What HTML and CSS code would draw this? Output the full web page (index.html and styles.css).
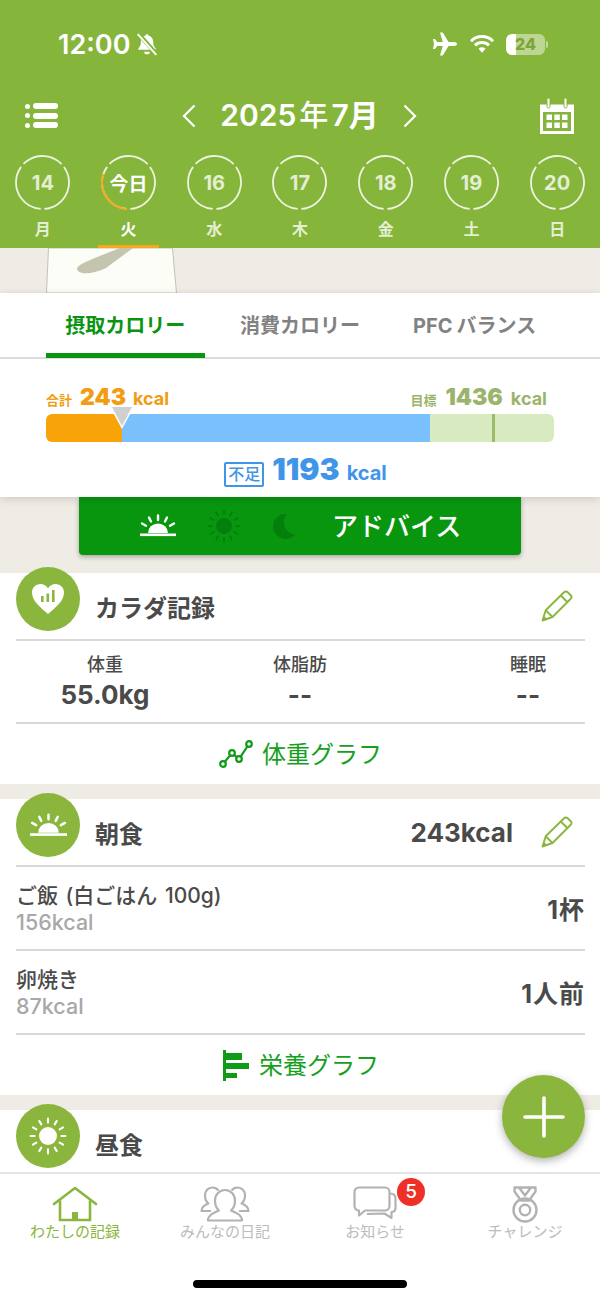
FILE: index.html
```html
<!DOCTYPE html>
<html lang="ja">
<head>
    <meta charset="UTF-8">
    <meta name="viewport" content="width=device-width, initial-scale=1.0">
    <title>わたしの記録</title>
    <link rel="stylesheet" href="styles.css">
</head>
<body>

<svg class="defs" width="0" height="0" aria-hidden="true">
    <symbol id="ring" viewBox="0 0 55 55">
        <circle cx="27.5" cy="27.5" r="26.5" pathLength="360" stroke-dasharray="122 8 122 8 92 8" transform="rotate(-36 27.5 27.5)"/>
    </symbol>
    <symbol id="sunrise" viewBox="0 0 36 24">
        <path d="M8 19a10 9.5 0 0 1 20 0z" fill="currentColor"/>
        <rect x="0" y="19.5" width="36" height="2.6" fill="currentColor"/>
        <g stroke="currentColor" stroke-width="2.4" stroke-linecap="round">
            <path d="M18 1.500v4.500M9 3.500l2 4M27 3.500l-2 4M2 9.500l4 2.200M34 9.500l-4 2.200"/>
        </g>
    </symbol>
    <symbol id="sun" viewBox="0 0 36 36">
        <circle cx="18" cy="18" r="8.500" fill="currentColor"/>
        <g stroke="currentColor" stroke-width="2" stroke-linecap="round">
            <path d="M18 1.500v3.800M18 30.700v3.800M1.500 18h3.800M30.700 18h3.800M9.750 3.700l1.900 3.300M24.350 29l1.900 3.300M26.250 3.700l-1.900 3.300M11.650 29l-1.900 3.300M3.700 9.750l3.300 1.900M29 24.350l3.300 1.900M32.300 9.750l-3.300 1.900M7 24.350l-3.300 1.900"/>
        </g>
    </symbol>
    <symbol id="pencil" viewBox="0 0 32 32">
        <g fill="none" stroke="#8ab63e" stroke-width="1.9" stroke-linejoin="round">
            <path d="M1.500 30.500l3.200-10.200L22.800 2.500q2-2 4-.2l2.700 2.700q2 2 0 4L11.500 27z"/>
            <path d="M4.700 20.300l6.800 6.700M19.800 5.500l6.800 6.700"/>
        </g>
        <path d="M1.500 30.500l1.400-4.700 3.300 3.300z" fill="#8ab63e"/>
    </symbol>
</svg>

<div class="app">
    <header class="top">
        <div class="status">
            <div class="status-left">
                <span class="clock">12:00</span>
                <svg class="bell" width="24" height="24" viewBox="0 0 22 22">
                    <path d="M11 2a1.300 1.300 0 0 1 1.300 1.300c3 .7 4.400 3.200 4.400 6.200 0 3 1 4.300 2.300 5.700v1H3v-1c1.300-1.400 2.300-2.700 2.300-5.700 0-3 1.400-5.500 4.400-6.200A1.300 1.300 0 0 1 11 2zM8.500 18h5a2.500 2.500 0 0 1-5 0z" fill="#fff"/>
                    <path d="M3 1.500l17 19" stroke="#86b53c" stroke-width="4"/>
                    <path d="M2.500 2l17 19" stroke="#fff" stroke-width="1.800"/>
                </svg>
            </div>
            <div class="status-right">
                <svg width="26" height="26" viewBox="0 0 26 26">
                    <path d="M25 13c0-1.200-1.300-2-3-2h-5.500L10.800 1.500H8l2.800 9.500H5.200L3 8H1l1 5-1 5h2l2.200-3h5.600L8 24.500h2.800L16.500 15H22c1.700 0 3-.8 3-2z" fill="#fff"/>
                </svg>
                <svg width="26" height="20" viewBox="0 0 26 20">
                    <g fill="none" stroke="#fff" stroke-width="3">
                        <path d="M2 7.200a15.500 15.500 0 0 1 22 0"/>
                        <path d="M6 11.400a10 10 0 0 1 14 0"/>
                    </g>
                    <path d="M9.500 14.800a5 5 0 0 1 7 0L13 18.800z" fill="#fff"/>
                </svg>
                <div class="battery"><span>24</span></div>
                <i class="battery-tip"></i>
            </div>
        </div>

        <div class="month-bar">
            <div class="menu-icon">
                <i class="menu-line"></i>
                <i class="menu-line"></i>
                <i class="menu-line"></i>
            </div>
            <div class="month">
                <svg width="14" height="24" viewBox="0 0 14 24"><path d="M12.500 1.500L2 12l10.500 10.500" fill="none" stroke="#fff" stroke-width="2.200"/></svg>
                <span class="month-text">2025<small>年</small>7月</span>
                <svg width="14" height="24" viewBox="0 0 14 24"><path d="M1.500 1.500L12 12 1.500 22.500" fill="none" stroke="#fff" stroke-width="2.200"/></svg>
            </div>
            <svg class="calendar" width="36" height="36" viewBox="0 0 36 36">
                <path d="M1 6.500h34V36H1z" fill="#fff"/>
                <rect x="4" y="14" width="28" height="19" fill="#86b53c"/>
                <rect x="8" y="0" width="3" height="10" rx="1.500" fill="#fff" stroke="#86b53c" stroke-width="1"/>
                <rect x="25" y="0" width="3" height="10" rx="1.500" fill="#fff" stroke="#86b53c" stroke-width="1"/>
                <g fill="#fff">
                    <rect x="7.500" y="16.500" width="5.500" height="5.500"/><rect x="15.300" y="16.500" width="5.500" height="5.500"/><rect x="23" y="16.500" width="5.500" height="5.500"/>
                    <rect x="7.500" y="24.500" width="5.500" height="5.500"/><rect x="15.300" y="24.500" width="5.500" height="5.500"/><rect x="23" y="24.500" width="5.500" height="5.500"/>
                </g>
            </svg>
        </div>

        <div class="week">
            <div class="day">
                <div class="ring"><svg width="55" height="55"><use href="#ring"/></svg><span>14</span></div>
                <div class="day-name">月</div>
            </div>
            <div class="day today">
                <div class="ring">
                    <svg width="55" height="55" viewBox="0 0 55 55">
                        <use href="#ring"/>
                        <circle class="ring-progress" cx="27.500" cy="27.500" r="26.500" pathLength="360" stroke-dasharray="106 254" transform="rotate(94 27.500 27.500)"/>
                    </svg>
                    <span>今日</span>
                </div>
                <div class="day-name">火</div>
            </div>
            <div class="day">
                <div class="ring"><svg width="55" height="55"><use href="#ring"/></svg><span>16</span></div>
                <div class="day-name">水</div>
            </div>
            <div class="day">
                <div class="ring"><svg width="55" height="55"><use href="#ring"/></svg><span>17</span></div>
                <div class="day-name">木</div>
            </div>
            <div class="day">
                <div class="ring"><svg width="55" height="55"><use href="#ring"/></svg><span>18</span></div>
                <div class="day-name">金</div>
            </div>
            <div class="day">
                <div class="ring"><svg width="55" height="55"><use href="#ring"/></svg><span>19</span></div>
                <div class="day-name">土</div>
            </div>
            <div class="day">
                <div class="ring"><svg width="55" height="55"><use href="#ring"/></svg><span>20</span></div>
                <div class="day-name">日</div>
            </div>
        </div>
    </header>

    <main class="content">
        <svg class="scene" width="600" height="45" viewBox="0 0 600 45">
            <path d="M48.500 0L46.500 45H176.500L172.500 0z" fill="#fdfdf7" stroke="#c4c2b8" stroke-width="1"/>
            <path d="M133 0L106 20C94 26 77 28 77 20 80 15 95 10 120 0z" fill="#c5c4ae"/>
        </svg>

        <section class="summary">
            <div class="tabs">
                <div class="tab tab-active">摂取カロリー</div>
                <div class="tab">消費カロリー</div>
                <div class="tab">PFC<small>バランス</small></div>
            </div>
            <div class="kcal">
                <div class="kcal-labels">
                    <div class="kcal-total"><small>合計</small><b>243</b><em>kcal</em></div>
                    <div class="kcal-goal"><small>目標</small><b>1436</b><em>kcal</em></div>
                </div>
                <div class="bar">
                    <div class="bar-eaten"></div>
                    <div class="bar-short"></div>
                    <div class="bar-rest"><i class="bar-mark"></i></div>
                    <i class="bar-pointer"></i>
                </div>
                <div class="shortage"><span class="shortage-tag">不足</span><b>1193</b><em>kcal</em></div>
            </div>
        </section>

        <div class="advice">
            <svg class="advice-icon" width="36" height="24"><use href="#sunrise"/></svg>
            <svg class="advice-icon off" width="34" height="34"><use href="#sun"/></svg>
            <svg class="advice-moon" width="26" height="26" viewBox="0 0 26 26"><path d="M17 1A12.500 12.500 0 1 0 25 21.500 12.500 12.500 0 0 1 17 1z" fill="#057f0b"/></svg>
            <span class="advice-text">アドバイス</span>
        </div>

        <section class="card">
            <div class="card-head">
                <div class="round-icon">
                    <svg width="34" height="32" viewBox="0 0 34 32">
                        <path d="M17 31C9 24 1 18 1 9.500 1 4.500 5 1 9.500 1 12.500 1 15.500 2.500 17 5.500 18.500 2.500 21.500 1 24.500 1 29 1 33 4.500 33 9.500 33 18 25 24 17 31z" fill="#fff"/>
                        <g fill="#8ab63e"><rect x="10" y="13" width="2.600" height="6"/><rect x="15.500" y="10.500" width="2.600" height="8.500"/><rect x="21" y="7" width="2.600" height="12"/></g>
                    </svg>
                </div>
                <h2 class="card-title">カラダ記録</h2>
                <svg class="pencil" width="32" height="32"><use href="#pencil"/></svg>
            </div>
            <div class="stats">
                <div class="stat"><span class="stat-label">体重</span><span class="stat-value">55.0kg</span></div>
                <div class="stat"><span class="stat-label">体脂肪</span><span class="stat-value">--</span></div>
                <div class="stat"><span class="stat-label">睡眠</span><span class="stat-value">--</span></div>
            </div>
            <div class="graph-link">
                <svg width="34" height="28" viewBox="0 0 34 28">
                    <path d="M4 24L13 13 20 19 30 4" fill="none" stroke="#0f9a17" stroke-width="2.200"/>
                    <g fill="#fff" stroke="#0f9a17" stroke-width="2.200"><circle cx="4" cy="24" r="2.800"/><circle cx="13" cy="13" r="2.800"/><circle cx="20" cy="19" r="2.800"/><circle cx="30" cy="4" r="2.800"/></g>
                </svg>
                <span>体重グラフ</span>
            </div>
        </section>

        <section class="card">
            <div class="card-head">
                <div class="round-icon"><svg width="37" height="25"><use href="#sunrise"/></svg></div>
                <h2 class="card-title">朝食</h2>
                <span class="card-kcal">243kcal</span>
                <svg class="pencil" width="32" height="32"><use href="#pencil"/></svg>
            </div>
            <div class="meal">
                <div class="meal-info"><div class="meal-name">ご飯 (白ごはん 100g)</div><div class="meal-kcal">156kcal</div></div>
                <div class="meal-amount">1杯</div>
            </div>
            <div class="meal">
                <div class="meal-info"><div class="meal-name">卵焼き</div><div class="meal-kcal">87kcal</div></div>
                <div class="meal-amount">1人前</div>
            </div>
            <div class="graph-link">
                <svg width="28" height="31" viewBox="0 0 28 31">
                    <g fill="#0f9a17"><rect x="1" y="0" width="3" height="31"/><rect x="1" y="3" width="19" height="7"/><rect x="1" y="13" width="26" height="6"/><rect x="1" y="23" width="14" height="5"/></g>
                </svg>
                <span>栄養グラフ</span>
            </div>
        </section>

        <section class="card">
            <div class="card-head">
                <div class="round-icon"><svg width="38" height="38"><use href="#sun"/></svg></div>
                <h2 class="card-title">昼食</h2>
            </div>
        </section>
    </main>

    <div class="fab">
        <svg width="42" height="42" viewBox="0 0 42 42"><path d="M21 2v38M2 21h38" stroke="#fff" stroke-width="3.600" stroke-linecap="round"/></svg>
    </div>

    <nav class="tabbar">
        <div class="tabbar-items">
            <div class="nav-item nav-active">
                <div class="nav-icon">
                    <svg width="46" height="36" viewBox="0 0 46 36">
                        <path d="M2 18L23 2l21 16" fill="none" stroke="#8ab63e" stroke-width="2.600" stroke-linejoin="round" stroke-linecap="round"/>
                        <path d="M8 14.500V34h30V14.500" fill="none" stroke="#8ab63e" stroke-width="2.600"/>
                        <rect x="20" y="26" width="6" height="8" fill="#8ab63e"/>
                    </svg>
                </div>
                <span>わたしの記録</span>
            </div>
            <div class="nav-item">
                <div class="nav-icon">
                    <svg width="50" height="36" viewBox="0 0 50 36">
                        <g fill="none" stroke="#b2b2b2" stroke-width="2.200" stroke-linejoin="round">
                            <path d="M11 25H1.500c0-4 3-6 7-7.500-2.500-2-3.500-5-3.500-8 0-4.500 3-8 7.500-8 2.500 0 4.500 1 6 3"/>
                            <path d="M39 25h9.500c0-4-3-6-7-7.500 2.500-2 3.500-5 3.500-8 0-4.500-3-8-7.500-8-2.500 0-4.500 1-6 3"/>
                            <path d="M8 34.500c0-5 4-7 11-10-3-2.500-4-6-4-10C15 8.500 19.500 4 25 4s10 4.500 10 10.500c0 4-1 7.500-4 10 7 3 11 5 11 10z" fill="#fff"/>
                        </g>
                    </svg>
                </div>
                <span>みんなの日記</span>
            </div>
            <div class="nav-item nav-notice">
                <div class="nav-icon">
                    <svg width="44" height="34" viewBox="0 0 44 34">
                        <g fill="none" stroke="#b2b2b2" stroke-width="2.200" stroke-linejoin="round">
                            <path d="M37 7.500c3 0 5.500 1.500 5.500 5V22c0 2.500-1.500 4-4 4v6l-7-4.500L14 28"/>
                            <path d="M6 1.500h26c2.500 0 4.500 2 4.500 4.500v14c0 2.500-2 4.500-4.500 4.500H12l-6 5v-5c-2.500 0-4.500-2-4.500-4.500V6C1.500 3.500 3.500 1.500 6 1.500z" fill="#fff"/>
                        </g>
                    </svg>
                    <span class="badge">5</span>
                </div>
                <span>お知らせ</span>
            </div>
            <div class="nav-item">
                <div class="nav-icon">
                    <svg width="26" height="37" viewBox="0 0 26 37">
                        <g fill="none" stroke="#b2b2b2" stroke-width="2.400" stroke-linejoin="round">
                            <path d="M2.500 1.500h21v4L17 14.500H9L2.500 5.500zM7 1.500l6 8 6-8"/>
                            <circle cx="13" cy="24" r="11.500"/>
                            <circle cx="13" cy="24" r="5.200"/>
                        </g>
                    </svg>
                </div>
                <span>チャレンジ</span>
            </div>
        </div>
        <div class="home-bar"></div>
    </nav>
</div>

</body>
</html>
```

FILE: styles.css
```css
* {
    box-sizing: border-box;
}
body {
    font-family: Inter, "Noto Sans CJK JP", sans-serif;
    background-color: #efece5;
    color: #4a4a4a;
    margin: 0;
    padding: 0;
}
.defs {
    display: block;
    height: 0;
}
.app {
    position: relative;
    width: 600px;
    height: 1300px;
    display: flex;
    flex-direction: column;
    overflow: hidden;
}

/* green header */
.top {
    background-color: #86b53c;
    color: white;
    height: 248px;
    flex: none;
}
.status {
    height: 88px;
    padding: 0 52px 0 58px;
    display: flex;
    justify-content: space-between;
    align-items: center;
}
.status-left {
    display: flex;
    align-items: center;
    gap: 5px;
}
.clock {
    font-size: 27px;
    font-weight: 600;
}
.status-right {
    display: flex;
    align-items: center;
    gap: 11px;
}
.battery {
    width: 39px;
    height: 21px;
    border-radius: 6px;
    background: linear-gradient(90deg, #fff 25%, rgba(255, 255, 255, 0.45) 25%);
    color: #7da53a;
    font-size: 16px;
    font-weight: 800;
    line-height: 21px;
    text-align: center;
}
.battery-tip {
    width: 2px;
    height: 7px;
    margin-left: -10px;
    border-radius: 0 2px 2px 0;
    background-color: rgba(255, 255, 255, 0.5);
}
.month-bar {
    height: 55px;
    padding: 0 25px;
    display: flex;
    justify-content: space-between;
    align-items: center;
}
.menu-icon {
    width: 33px;
    height: 25px;
    display: flex;
    flex-direction: column;
    justify-content: space-between;
}
.menu-line {
    display: block;
    position: relative;
    height: 6px;
    margin-left: 8px;
    border-radius: 3px;
    background-color: white;
}
.menu-line::before {
    content: "";
    position: absolute;
    left: -8px;
    top: 0.5px;
    width: 5px;
    height: 5px;
    border-radius: 50%;
    background-color: white;
}
.month {
    display: flex;
    align-items: center;
    gap: 24px;
    margin-left: 2px;
}
.month-text {
    padding-bottom: 5px;
    font-size: 30px;
    font-weight: 600;
    white-space: nowrap;
}
.month-text small {
    font-size: 29px;
    font-weight: 500;
    margin: 0 3px;
}
.week {
    display: grid;
    grid-template-columns: repeat(7, 1fr);
    padding-top: 12px;
}
.day {
    display: flex;
    flex-direction: column;
    align-items: center;
}
.ring {
    position: relative;
    width: 55px;
    height: 55px;
    display: flex;
    align-items: center;
    justify-content: center;
    fill: none;
    stroke: #edf3e0;
    stroke-width: 1.8;
    color: #e4eed2;
    font-size: 20px;
    font-weight: 700;
}
.ring svg {
    position: absolute;
    left: 0;
    top: 0;
}
.ring span {
    position: relative;
    stroke: none;
}
.today .ring {
    color: white;
    font-size: 19px;
}
.ring-progress {
    fill: none;
    stroke: #f5a81c;
    stroke-width: 2;
}
.day-name {
    width: 61px;
    height: 38px;
    padding-top: 4px;
    line-height: 31px;
    border-bottom: 3px solid transparent;
    color: #e4eed2;
    font-size: 16px;
    font-weight: 700;
    text-align: center;
}
.today .day-name {
    color: white;
    border-bottom-color: #f5a81c;
}

/* scrolling content */
.content {
    flex: 1;
    min-height: 0;
    overflow: hidden;
}
.scene {
    display: block;
}
.summary {
    position: relative;
    z-index: 1;
    height: 204px;
    background-color: white;
    box-shadow: 0 2px 8px rgba(0, 0, 0, 0.15);
}
.tabs {
    height: 66px;
    padding: 0 38px;
    display: grid;
    grid-template-columns: repeat(3, 1fr);
    border-bottom: 2px solid #dcdcdc;
}
.tab {
    height: 65px;
    margin: 0 8px;
    line-height: 66px;
    color: #828282;
    font-size: 20px;
    font-weight: 700;
    text-align: center;
    white-space: nowrap;
}
.tab small {
    font-size: 20px;
    margin-left: 4px;
}
.tab-active {
    color: #0a9412;
    border-bottom: 5px solid #0a9412;
}
.kcal {
    padding: 0 46px;
}
.kcal-labels {
    height: 55px;
    padding-top: 25px;
    display: flex;
    justify-content: space-between;
    align-items: baseline;
    line-height: 26px;
    font-weight: 700;
}
.kcal-labels small {
    font-size: 13px;
    margin-right: 8px;
}
.kcal-labels b {
    font-size: 23px;
    margin-right: 7px;
}
.kcal-labels em,
.shortage em {
    font-style: normal;
    font-weight: 700;
}
.kcal-labels em {
    font-size: 18px;
}
.kcal-total {
    color: #f29c11;
}
.kcal-goal {
    color: #9bb46c;
    margin-right: 7px;
}
.kcal-goal small {
    margin-right: 9px;
}
.kcal-goal b {
    margin-right: 8px;
}
.bar {
    position: relative;
    height: 28px;
    display: flex;
    border-radius: 6px;
}
.bar-eaten {
    width: 76px;
    background-color: #f9a30a;
    border-radius: 6px 0 0 6px;
}
.bar-short {
    width: 308px;
    background-color: #79c0fc;
}
.bar-rest {
    flex: 1;
    background-color: #d7eac0;
    border-radius: 0 6px 6px 0;
    padding-left: 62px;
}
.bar-mark {
    display: block;
    width: 3px;
    height: 28px;
    background-color: #9bbb67;
}
.bar-pointer {
    position: absolute;
    left: 64px;
    top: -7px;
    width: 24px;
    height: 22px;
    background-color: white;
    clip-path: polygon(0 0, 100% 0, 50% 100%);
}
.bar-pointer::after {
    content: "";
    position: absolute;
    left: 2px;
    top: 0;
    width: 20px;
    height: 19px;
    background-color: #cfcfcf;
    clip-path: polygon(0 0, 100% 0, 50% 100%);
}
.shortage {
    height: 53px;
    padding: 9px 0 0 11px;
    display: flex;
    justify-content: center;
    align-items: baseline;
    color: #4095e8;
    font-weight: 700;
}
.shortage-tag {
    width: 40px;
    height: 25px;
    margin-right: 8px;
    border: 2px solid #4095e8;
    border-radius: 2px;
    font-size: 16px;
    font-weight: 500;
    line-height: 21px;
    text-align: center;
}
.shortage b {
    font-size: 30px;
    margin-right: 7px;
}
.shortage em {
    font-size: 20px;
}
.advice {
    height: 58px;
    margin: 0 79px 18px;
    padding-left: 61px;
    display: flex;
    align-items: center;
    border-radius: 0 0 4px 4px;
    background-color: #08960f;
    color: white;
    box-shadow: 0 2px 5px rgba(0, 0, 0, 0.3);
}
.advice-icon {
    margin-right: 31px;
    flex: none;
}
.advice-icon.off {
    color: #057f0b;
    margin-right: 29px;
}
.advice-moon {
    flex: none;
    margin-right: 36px;
}
.advice-text {
    padding-bottom: 4px;
    font-size: 26px;
    font-weight: 500;
    white-space: nowrap;
}

/* record cards */
.card {
    margin-bottom: 15px;
    padding: 0 15px 0 16px;
    background-color: white;
}
.card-head {
    height: 68px;
    display: flex;
    align-items: center;
    border-bottom: 2px solid #d8d8d8;
}
.round-icon {
    width: 64px;
    height: 64px;
    margin-top: -6px;
    align-self: flex-start;
    flex: none;
    display: flex;
    align-items: center;
    justify-content: center;
    border-radius: 50%;
    background-color: #8ab63e;
    color: white;
}
.card-title {
    flex: 1;
    margin: 0 0 0 15px;
    font-size: 24px;
    font-weight: 700;
    color: #4a4a4a;
}
.card-kcal {
    margin-right: 28px;
    font-size: 26px;
    font-weight: 700;
}
.pencil {
    flex: none;
    margin-right: 12px;
}
.stats {
    height: 83px;
    display: grid;
    grid-template-columns: 178px 212px 1fr;
    border-bottom: 2px solid #d8d8d8;
}
.stat {
    display: flex;
    flex-direction: column;
    align-items: center;
    padding-top: 11px;
}
.stat:last-child {
    justify-self: end;
    width: 114px;
}
.stat-label {
    font-size: 18px;
    line-height: 26px;
    font-weight: 500;
}
.stat-value {
    font-size: 26px;
    line-height: 34px;
    font-weight: 700;
}
.meal {
    height: 84px;
    display: flex;
    justify-content: space-between;
    align-items: center;
    border-bottom: 2px solid #d8d8d8;
}
.meal-info {
    padding-top: 2px;
}
.meal-name {
    font-size: 21px;
    line-height: 26px;
    font-weight: 500;
    word-spacing: 2px;
}
.meal-kcal {
    font-size: 21.5px;
    line-height: 26px;
    color: #a8a8a8;
    font-weight: 500;
}
.meal-amount {
    font-size: 25px;
    font-weight: 700;
    letter-spacing: 1px;
}
.graph-link {
    height: 60px;
    display: flex;
    justify-content: center;
    align-items: center;
    gap: 9px;
    color: #16a01e;
    font-size: 24px;
}
.graph-link span {
    padding-bottom: 3px;
}

/* floating add button */
.fab {
    position: absolute;
    right: 15px;
    bottom: 142px;
    z-index: 2;
    width: 83px;
    height: 83px;
    display: flex;
    align-items: center;
    justify-content: center;
    border-radius: 50%;
    background-color: #8ab63e;
    box-shadow: 0 3px 8px rgba(0, 0, 0, 0.3);
}

/* bottom navigation */
.tabbar {
    height: 128px;
    flex: none;
    display: flex;
    flex-direction: column;
    border-top: 2px solid #e4e4e4;
    background-color: white;
}
.tabbar-items {
    display: grid;
    grid-template-columns: repeat(4, 1fr);
    flex: 1;
}
.nav-item {
    display: flex;
    flex-direction: column;
    align-items: center;
    padding-top: 10px;
    color: #bcbcbc;
    font-size: 15px;
    line-height: 20px;
}
.nav-active {
    color: #8ab63e;
}
.nav-icon {
    position: relative;
    height: 38px;
    padding-top: 2px;
}
.nav-icon svg {
    display: block;
}
.badge {
    position: absolute;
    left: 44px;
    top: -6px;
    width: 28px;
    height: 28px;
    border-radius: 50%;
    background-color: #ee3026;
    color: white;
    font-size: 19px;
    font-weight: 500;
    line-height: 28px;
    text-align: center;
}
.home-bar {
    width: 214px;
    height: 8px;
    margin: 0 auto 12px;
    border-radius: 4px;
    background-color: black;
}
```
